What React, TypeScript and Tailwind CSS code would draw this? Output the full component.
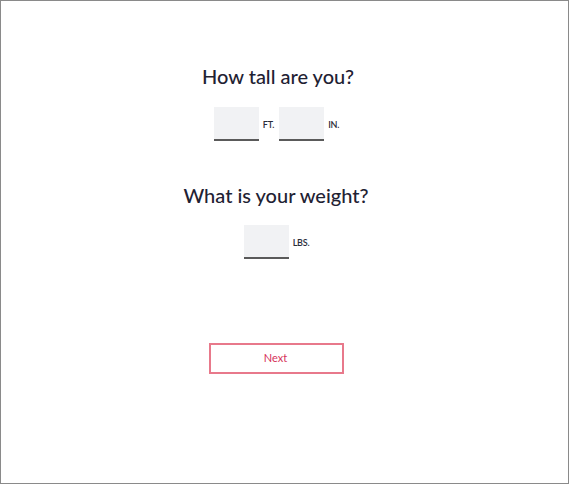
export default function App() {
  const box = "w-[45px] h-[34px] bg-[#f1f2f4] border-b-2 border-[#5a5a5a] outline-none text-center text-sm"
  const unit = "ml-[4px] text-[9px] font-semibold tracking-tight text-[#2b2d3a] leading-none"

  return (
    <div
      className="w-[569px] h-[484px] border border-[#8a8a8a] bg-white flex flex-col items-center pr-[17px] pt-[63px]"
      style={{ fontFamily: 'Lato, "Noto Sans", sans-serif' }}
    >
      <h1 className="text-[20px] leading-[24px] text-[#1f2233] font-medium pl-[4px]">How tall are you?</h1>
      <div className="mt-[19px] flex items-center pl-[1px]">
        <input className={box} />
        <span className={unit}>FT.</span>
        <input className={`${box} ml-[5px]`} />
        <span className={unit}>IN.</span>
      </div>

      <h1 className="mt-[42px] text-[20px] leading-[24px] text-[#1f2233] font-medium">What is your weight?</h1>
      <div className="mt-[18px] flex items-center pl-[1px]">
        <input className={box} />
        <span className={unit}>LBS.</span>
      </div>

      <button
        type="button"
        className="mt-[84px] w-[135px] h-[31px] border-2 border-[#e8798b] text-[#d6335a] text-[11px] bg-white pr-[1px]"
      >
        Next
      </button>
    </div>
  )
}
